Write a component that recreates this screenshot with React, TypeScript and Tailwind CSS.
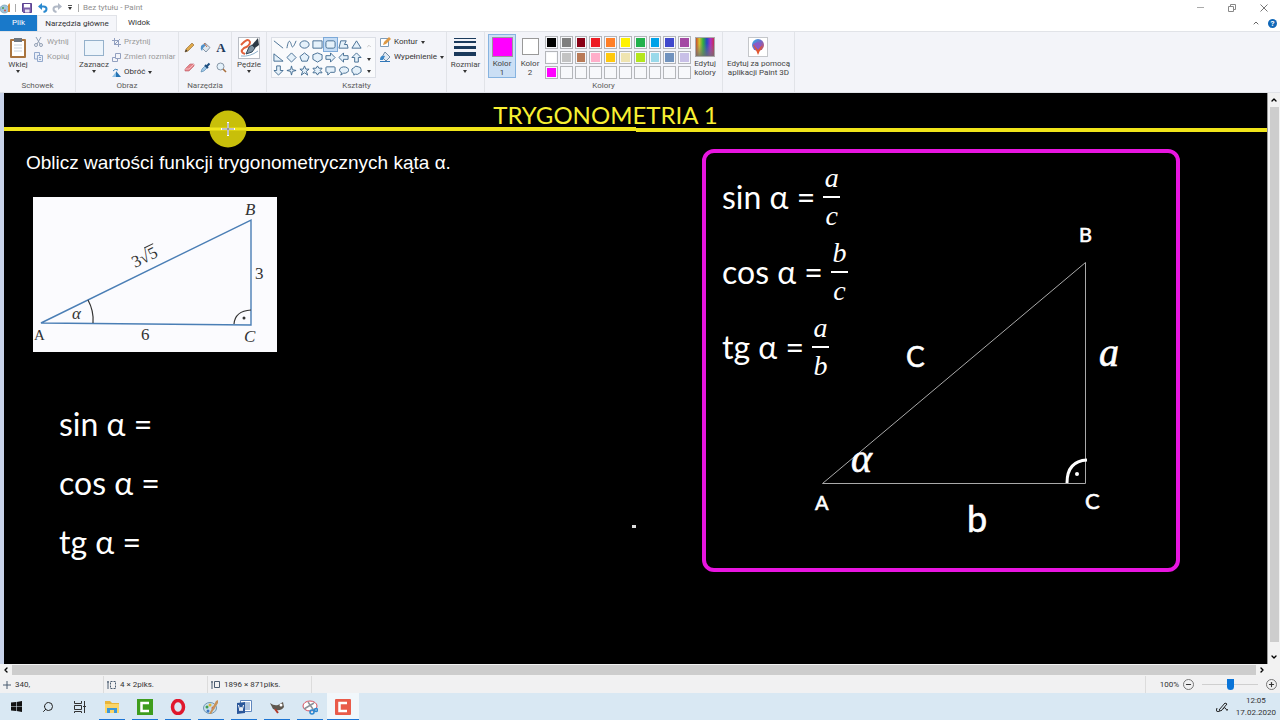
import React from 'react';
import { ChevronDown, ChevronLeft, ChevronRight, ChevronUp, Minus, Plus, Search } from 'lucide-react';

// Palette swatches, row by row. Empty string means an unused slot
const palette = [
  '#000000', '#7f7f7f', '#880015', '#ed1c24', '#ff7f27', '#fff200', '#22b14c', '#00a2e8', '#3f48cc', '#a349a4',
  '#ffffff', '#c3c3c3', '#b97a57', '#ffaec9', '#ffc90e', '#efe4b0', '#b5e61d', '#99d9ea', '#7092be', '#c8bfe7',
  '#ff00ff', '', '', '', '', '', '', '', '', '',
];

// Outlines of the shape gallery, drawn on a 12x12 grid
const shapes = [
  { name: 'Linia', d: 'M1 2L11 10' },
  { name: 'Krzywa', d: 'M1 10C3 -2 5 3 6 7C7 11 9 7 11 2' },
  { name: 'Elipsa', d: 'M1 6A5 4 0 1 0 11 6A5 4 0 1 0 1 6' },
  { name: 'Prostokąt', d: 'M1 2H11V10H1Z' },
  { name: 'Prostokąt zaokrąglony', d: 'M3 2H9Q11 2 11 4V8Q11 10 9 10H3Q1 10 1 8V4Q1 2 3 2Z' },
  { name: 'Wielokąt', d: 'M1 10L3 2H9L7 6H10L11 10Z' },
  { name: 'Trójkąt', d: 'M6 2L11 10H1Z' },
  { name: 'Trójkąt prostokątny', d: 'M1 2L11 10H1Z' },
  { name: 'Romb', d: 'M6 1L11 6L6 11L1 6Z' },
  { name: 'Pięciokąt', d: 'M6 1L11 5L9 10H3L1 5Z' },
  { name: 'Sześciokąt', d: 'M6 1L11 3V8L6 11L1 8V3Z' },
  { name: 'Strzałka w prawo', d: 'M1 4H6V1L11 6L6 11V8H1Z' },
  { name: 'Strzałka w lewo', d: 'M11 4H6V1L1 6L6 11V8H11Z' },
  { name: 'Strzałka w górę', d: 'M4 11V6H1L6 1L11 6H8V11Z' },
  { name: 'Strzałka w dół', d: 'M4 1V6H1L6 11L11 6H8V1Z' },
  { name: 'Gwiazda czteroramienna', d: 'M6 1L7 5L11 6L7 7L6 11L5 7L1 6L5 5Z' },
  { name: 'Gwiazda pięcioramienna', d: 'M6 1L7.5 4.5H11L8 7L9.5 11L6 8.5L2.5 11L4 7L1 4.5H4.5Z' },
  { name: 'Gwiazda sześcioramienna', d: 'M6 1L7.5 3.5H11L9 6L11 8.5H7.5L6 11L4.5 8.5H1L3 6L1 3.5H4.5Z' },
  { name: 'Objaśnienie zaokrąglone', d: 'M2 2H10Q11 2 11 3V7Q11 8 10 8H6L3 11V8H2Q1 8 1 7V3Q1 2 2 2Z' },
  { name: 'Objaśnienie owalne', d: 'M4 8.5L3 11L6 9A5 3.5 0 1 0 4 8.5Z' },
  { name: 'Objaśnienie w chmurce', d: 'M3 9Q1 9 1 6.500Q0 4 3 3Q5 0 8 2Q11 2 11 5Q12 8 9 9Q7 11 5 10L3 11Z' },
];

const leftFormulas = ['sin α =', 'cos α =', 'tg α ='];

const rightFormulas = [
  { text: 'sin α =', top: 'a', bottom: 'c' },
  { text: 'cos α =', top: 'b', bottom: 'c' },
  { text: 'tg α =', top: 'a', bottom: 'b' },
];

const Caret = () => (
  <svg viewBox="0 0 4 3" className="h-[3px] w-1 shrink-0" aria-hidden="true">
    <path d="M0 0H4L2 3Z" fill="#333" />
  </svg>
);

type GroupProps = { label?: string; className: string; children: React.ReactNode };

// One boxed section of the ribbon with its caption at the bottom
const Group = ({ label, className, children }: GroupProps) => (
  <section className={`flex shrink-0 flex-col border-r border-[#e1e3e8] ${className}`}>
    <div className="flex flex-1 justify-center pt-[5px]">{children}</div>
    {label && <h2 className="h-3 text-center leading-3 text-[#5c5c5c]">{label}</h2>}
  </section>
);

const TitleBar = () => (
  <header className="flex h-[15px] items-center bg-white text-[#8f8f8f]">
    <svg viewBox="0 0 11 12" className="h-3 w-[11px]" aria-hidden="true">
      <ellipse cx="4.500" cy="7" rx="4.500" ry="4" fill="#9fc5dc" stroke="#6d95a9" strokeWidth=".6" />
      <circle cx="3" cy="6" r="1" fill="#4f9b4c" />
      <circle cx="5" cy="8.500" r="1" fill="#cf574a" />
      <path d="M8 10V3L9.500 1L10 3V10Z" fill="#d98d3a" />
    </svg>
    <span className="ml-1 h-2 w-px bg-[#aaa]" />
    <button aria-label="Zapisz" className="ml-1.5">
      <svg viewBox="0 0 10 10" className="size-[10px]">
        <path d="M.5 .5H9.500V9.500H1.500L.5 8.500Z" fill="#7d62ac" stroke="#5b4390" />
        <path d="M2 1H8V4.500H2Z" fill="#fff" />
        <path d="M3 6.500H7.500V9.500H3Z" fill="#e8e2f3" />
      </svg>
    </button>
    <button aria-label="Cofnij" className="ml-1.5">
      <svg viewBox="0 0 10 10" className="size-[10px]" fill="none" stroke="#2b8ad0" strokeWidth="2">
        <path d="M2 3.500H5.500Q8.500 3.500 8.500 6T5.500 9" />
        <path d="M4 0L0 3.500L4 7Z" fill="#2b8ad0" stroke="none" />
      </svg>
    </button>
    <button aria-label="Ponów" className="ml-1">
      <svg viewBox="0 0 10 10" className="size-[10px]" fill="none" stroke="#b1b9c6" strokeWidth="2">
        <path d="M8 3.500H4.500Q1.500 3.500 1.500 6T4.500 9" />
        <path d="M6 0L10 3.500L6 7Z" fill="#b1b9c6" stroke="none" />
      </svg>
    </button>
    <button aria-label="Dostosuj pasek" className="ml-1.5 flex flex-col items-center gap-px">
      <span className="h-px w-1 bg-[#555]" />
      <Caret />
    </button>
    <span className="ml-1.5 h-2 w-px bg-[#aaa]" />
    <h1 className="ml-1">Bez tytułu - Paint</h1>
    <div className="ml-auto flex items-center gap-6 pr-3">
      <button aria-label="Minimalizuj">
        <svg viewBox="0 0 7 7" className="size-[7px]" stroke="#aaa"><path d="M0 3.500H7" /></svg>
      </button>
      <button aria-label="Przywróć">
        <svg viewBox="0 0 8 8" className="size-2" fill="none" stroke="#888"><path d="M.5 2.500H5.500V7.500H.5ZM2.500 2V.5H7.500V5.500H6" /></svg>
      </button>
      <button aria-label="Zamknij">
        <svg viewBox="0 0 8 8" className="size-2" stroke="#777"><path d="M.5 .5L7.500 7.500M7.500 .5L.5 7.500" /></svg>
      </button>
    </div>
  </header>
);

const Tabs = () => (
  <nav className="flex h-4 items-stretch bg-white text-[#333]">
    <button className="w-[37px] bg-[#1979ca] text-white">Plik</button>
    <button className="w-20 border-x border-t border-[#e1e3e8] bg-[#f5f6fa]">Narzędzia główne</button>
    <button className="w-11">Widok</button>
    <div className="ml-auto flex items-center gap-2 pr-[3px]">
      <button aria-label="Zwiń wstążkę"><ChevronUp className="size-2 text-[#666]" strokeWidth={3} /></button>
      <button className="size-[9px] rounded-full bg-[#1067b8] text-[8px] leading-[9px] font-bold text-white">?</button>
    </div>
  </nav>
);

const Ribbon = () => (
  <div className="flex h-[62px] border-y border-[#e1e3e8] bg-[#f3f4f9] text-[#444]">
    {/* Clipboard */}
    <Group label="Schowek" className="w-[76px]">
      <div className="flex w-full gap-1 pl-1.5">
        <button className="flex h-9 w-6 flex-col items-center leading-[10px]">
          <svg viewBox="0 0 18 22" className="mb-px h-[22px] w-[18px] shrink-0" aria-hidden="true">
            <rect x="1" y="2" width="16" height="19" rx="1" fill="#a9743f" />
            <path d="M3 4H15V19H3Z" fill="#fff" />
            <path d="M5 8H13M5 11H13M5 14H13" stroke="#c8d2dd" />
            <path d="M5 1H13V5H5Z" fill="#6e7680" />
          </svg>
          Wklej
          <Caret />
        </button>
        <div className="flex flex-col gap-[5px] text-[#9a9a9a]">
          <button className="flex h-[10px] items-center gap-1">
            <svg viewBox="0 0 9 10" className="h-[10px] w-[9px]" fill="none" stroke="#92a0b4" aria-hidden="true">
              <path d="M2 0L6 7M7 0L3 7" />
              <circle cx="2" cy="8" r="1.500" />
              <circle cx="7" cy="8" r="1.500" />
            </svg>
            Wytnij
          </button>
          <button className="flex h-[10px] items-center gap-1">
            <svg viewBox="0 0 9 10" className="h-[10px] w-[9px]" fill="#e9eef7" stroke="#92a8cc" aria-hidden="true">
              <path d="M.5 .5H5.500V7H.5Z" />
              <path d="M3.500 3.500H8.500V9.500H3.500ZM5 5.500H7M5 7.500H7" />
            </svg>
            Kopiuj
          </button>
        </div>
      </div>
    </Group>

    {/* Image */}
    <Group label="Obraz" className="w-[103px]">
      <div className="flex w-full gap-1 pl-1">
        <button className="flex w-7 flex-col items-center leading-[10px]">
          <svg viewBox="0 0 22 22" className="mb-px size-[22px] shrink-0" aria-hidden="true">
            <rect x="1.500" y="3.500" width="19" height="15" fill="#edf4fb" stroke="#3b6f9c" strokeDasharray="1 1" />
          </svg>
          Zaznacz
          <Caret />
        </button>
        <div className="flex flex-col gap-[5px] text-[#9a9a9a]">
          <button className="flex h-[10px] items-center gap-[3px]">
            <svg viewBox="0 0 9 9" className="size-[9px]" fill="none" stroke="#92a0c0" aria-hidden="true">
              <path d="M2.500 0V6.500H9M0 2.500H6.500V9M2 7L8 1" />
            </svg>
            Przytnij
          </button>
          <button className="flex h-[10px] items-center gap-[3px] whitespace-nowrap">
            <svg viewBox="0 0 9 9" className="size-[9px]" fill="none" stroke="#92a0c0" aria-hidden="true">
              <path d="M3.500 .5H8.500V5.500H3.500ZM3 4.500H.5V8.500H5.500V6" />
            </svg>
            Zmień rozmiar
          </button>
          <button className="flex h-[10px] items-center gap-[3px] text-[#333]">
            <svg viewBox="0 0 9 9" className="size-[9px]" aria-hidden="true">
              <path d="M0 9L4 4V9Z" fill="#8fc0e6" />
              <path d="M4 3L9 9H4Z" fill="#2372b3" />
              <path d="M1 3Q3 0 6 2" fill="none" stroke="#3a7db8" />
            </svg>
            Obróć
            <Caret />
          </button>
        </div>
      </div>
    </Group>

    {/* Tools */}
    <Group label="Narzędzia" className="w-[53px]">
      <div className="grid h-9 grid-cols-3 gap-x-[5px] gap-y-2 pt-1">
        <button aria-label="Ołówek">
          <svg viewBox="0 0 11 11" className="size-[11px]">
            <path d="M1 10L2 7L8 1L10 3L4 9Z" fill="#e0a94a" stroke="#8c6330" strokeWidth=".6" />
            <path d="M1 10L2 7.500L3.500 9Z" fill="#333" />
          </svg>
        </button>
        <button aria-label="Wypełnianie kolorem">
          <svg viewBox="0 0 11 11" className="size-[11px]">
            <path d="M5 1L10 5.500L6 10L2 6Z" fill="#dfe7ee" stroke="#6b8097" strokeWidth=".8" />
            <path d="M1 4Q3 1 6 3L3 6L2 9Q0 7 1 4Z" fill="#4f91ca" />
            <path d="M4 1L7 5" stroke="#c2704b" />
          </svg>
        </button>
        <button aria-label="Tekst" className="font-['Liberation_Serif',serif] text-[13px] leading-[11px] font-bold text-[#1f3a5c]">A</button>
        <button aria-label="Gumka">
          <svg viewBox="0 0 11 11" className="size-[11px]">
            <path d="M1 7L6 2H10V4L5 9H1Z" fill="#e5838a" stroke="#bd5d66" strokeWidth=".6" />
            <path d="M1 7H5L10 2" fill="none" stroke="#f5b9bd" />
          </svg>
        </button>
        <button aria-label="Selektor kolorów">
          <svg viewBox="0 0 11 11" className="size-[11px]">
            <path d="M1 10L2 7L6 3L8 5L4 9Z" fill="#9fc8e8" stroke="#4d7fa8" strokeWidth=".6" />
            <path d="M5 3L8 6M7 4L9.500 1.500" stroke="#1e4e80" strokeWidth="2" />
          </svg>
        </button>
        <button aria-label="Lupa">
          <svg viewBox="0 0 11 11" className="size-[11px]">
            <circle cx="4.500" cy="4.500" r="3.500" fill="#e4f1fb" stroke="#8797a7" />
            <path d="M7 7L10 10" stroke="#a9703c" strokeWidth="1.600" />
          </svg>
        </button>
      </div>
    </Group>

    {/* Brushes */}
    <Group className="w-[35px]">
      <button className="flex flex-col items-center leading-[10px]">
        <svg viewBox="0 0 22 22" className="mb-px size-[22px] shrink-0" aria-hidden="true">
          <rect x=".5" y=".5" width="21" height="21" fill="#fff" stroke="#b9bdc4" />
          <path d="M3 8Q10 0 12 5Q12 9 6 11Q1 15 7 17" fill="none" stroke="#e2603a" strokeWidth="2" />
          <path d="M8 17L11 10L14 8L17 11L14 15Z" fill="#8195a5" stroke="#34495a" />
          <path d="M14 8L20 1L21 8L17 11Z" fill="#2c3844" />
          <path d="M3 19Q12 20 20 14" fill="none" stroke="#8db1cc" />
        </svg>
        Pędzle
        <Caret />
      </button>
    </Group>

    {/* Shapes */}
    <Group label="Kształty" className="w-[180px]">
      <div className="flex w-full gap-1 pl-1">
        <div className="flex h-[41px] border border-[#dcdfe6] bg-[#f9fafc]">
          <div className="grid grid-cols-7">
            {shapes.map((shape) => (
              <button
                key={shape.name}
                aria-label={shape.name}
                className={shape.name === 'Prostokąt zaokrąglony'
                  ? 'flex size-[13px] items-center justify-center bg-[#c4dcf5] outline outline-[#7da9d8]'
                  : 'flex size-[13px] items-center justify-center'}
              >
                <svg viewBox="0 0 12 12" className="size-[11px]" fill="#e5f1fa" stroke="#40698f">
                  <path d={shape.d} fill={shape.name === 'Linia' || shape.name === 'Krzywa' ? 'none' : undefined} />
                </svg>
              </button>
            ))}
          </div>
          <div className="flex w-3 flex-col items-center justify-around">
            <ChevronUp className="size-1.5 text-[#999]" />
            <Caret />
            <Caret />
          </div>
        </div>
        <div className="flex flex-col gap-[5px] text-[#333]">
          <button className="flex h-[10px] items-center gap-[3px]">
            <svg viewBox="0 0 11 10" className="h-[10px] w-[11px]" aria-hidden="true">
              <path d="M.5 1.500H8.500V9.500H.5Z" fill="#fff" stroke="#7d9bb8" />
              <path d="M3 8L4 5L9 0L11 2L6 7Z" fill="#dd9844" />
            </svg>
            Kontur
            <Caret />
          </button>
          <button className="flex h-[10px] items-center gap-[3px]">
            <svg viewBox="0 0 11 10" className="h-[10px] w-[11px]" aria-hidden="true">
              <path d="M0 9.500H10" stroke="#2f77bb" />
              <path d="M5 0L10 5L6 9L2 5Z" fill="#dfe8f2" stroke="#6f8aa5" />
              <path d="M0 8Q0 3 5 4L3 8Z" fill="#3a86c8" />
            </svg>
            Wypełnienie
            <Caret />
          </button>
        </div>
      </div>
    </Group>

    {/* Line width */}
    <Group className="w-[38px]">
      <button className="flex flex-col items-center leading-[10px]">
        <svg viewBox="0 0 22 22" className="mb-px size-[22px] shrink-0" stroke="#1b3a5c" aria-hidden="true">
          <path d="M0 1.500H22" />
          <path d="M0 5H22" strokeWidth="2" />
          <path d="M0 10.500H22" strokeWidth="3" />
          <path d="M0 17H22" strokeWidth="4" />
        </svg>
        Rozmiar
        <Caret />
      </button>
    </Group>

    {/* Colors */}
    <Group label="Kolory" className="w-[238px]">
      <div className="flex w-full pl-[3px]">
        <button className="-mt-[3px] flex h-[44px] w-7 flex-col items-center border border-[#86b3e0] bg-[#cbdff5] pt-0.5 leading-[9px]">
          <span className="mb-0.5 size-[21px] border border-[#999] bg-[#ff00ff]" />
          Kolor<br />1
        </button>
        <button className="flex w-7 flex-col items-center pt-px leading-[9px]">
          <span className="mb-1 size-[17px] border border-[#999] bg-white" />
          Kolor<br />2
        </button>
        <div className="-mt-px ml-px grid h-[43px] w-[146px] grid-cols-10 gap-0.5">
          {palette.map((color, index) => (
            <button key={index} aria-label={color || 'Pusty kolor'} className="border border-[#b4b6ba] bg-[#f7f8fb] p-px">
              <span className="block size-full" style={{ backgroundColor: color || undefined }} />
            </button>
          ))}
        </div>
        <button className="flex w-7 flex-col items-center leading-[9px]">
          <svg viewBox="0 0 20 20" className="mb-0.5 size-5 shrink-0" aria-hidden="true">
            <defs>
              <linearGradient id="rainbow">
                <stop offset="0" stopColor="#c23b2f" />
                <stop offset=".2" stopColor="#d6c22f" />
                <stop offset=".4" stopColor="#2fae3f" />
                <stop offset=".6" stopColor="#2448c6" />
                <stop offset=".8" stopColor="#b02fc0" />
                <stop offset="1" stopColor="#c92f3f" />
              </linearGradient>
              <linearGradient id="shade" x2="0" y2="1">
                <stop offset=".3" stopColor="#808080" stopOpacity="0" />
                <stop offset="1" stopColor="#707070" stopOpacity=".8" />
              </linearGradient>
            </defs>
            <rect x=".5" y=".5" width="19" height="19" fill="url(#rainbow)" stroke="#aaa" />
            <rect x="1" y="1" width="18" height="18" fill="url(#shade)" />
          </svg>
          Edytuj<br />kolory
        </button>
      </div>
    </Group>

    {/* Paint 3D */}
    <Group className="w-[72px]">
      <button className="flex flex-col items-center leading-[9px] whitespace-nowrap">
        <svg viewBox="0 0 20 20" className="mb-0.5 size-5 shrink-0" aria-hidden="true">
          <defs>
            <linearGradient id="drop" x1="0" y1="0" x2="1" y2="1">
              <stop offset="0" stopColor="#27b4e8" />
              <stop offset=".5" stopColor="#7864c8" />
              <stop offset="1" stopColor="#e8503a" />
            </linearGradient>
          </defs>
          <rect x=".5" y=".5" width="19" height="19" fill="#fff" stroke="#c4c6ca" />
          <circle cx="10" cy="8" r="6" fill="url(#drop)" />
          <path d="M5 8L10 6L14 9L10 18L8 13Z" fill="#e2572f" />
          <path d="M5 7L10 5L14 8L10 13Z" fill="#8a5ac6" />
        </svg>
        Edytuj za pomocą<br />aplikacji Paint 3D
      </button>
    </Group>
  </div>
);

// Scanned exercise with the 6 / 3 / 3√5 triangle
const Exercise = () => (
  <svg viewBox="0 0 244 155" className="ml-[29px] h-[155px] w-[244px] bg-[#fbfbfe] font-['Liberation_Serif',serif] text-[17px]">
    <path d="M8 126L218 23V128Z" fill="none" stroke="#4a7eb5" strokeWidth="1.400" />
    <path d="M55 103Q61 114 60 126M201 127Q202 114 218 113" fill="none" stroke="#333" strokeWidth="1.200" />
    <circle cx="211" cy="121" r="1.500" fill="#333" />
    <g fill="#333">
      <text x="212" y="18" fontStyle="italic">B</text>
      <text x="1" y="143" fontSize="15">A</text>
      <text x="211" y="145" fontStyle="italic">C</text>
      <text x="108" y="143">6</text>
      <text x="222" y="82">3</text>
      <text x="39" y="122" fontStyle="italic">α</text>
      <g transform="rotate(-26 102 71)">
        <text x="102" y="71">3√</text>
        <text x="120" y="71">5</text>
        <path d="M119 57H129" stroke="#333" />
      </g>
    </g>
  </svg>
);

const Fraction = ({ top, bottom }: { top: string; bottom: string }) => (
  <span className="flex w-[17px] flex-col items-center font-['Liberation_Serif',serif] text-[28px] leading-9 italic">
    <span>{top}</span>
    <span className="h-0.5 w-full bg-white" />
    <span>{bottom}</span>
  </span>
);

const Definitions = () => (
  <div className="relative mt-[17px] h-[423px] w-[478px] rounded-xl border-4 border-[#e815e0] pt-1.5 pl-4">
    {rightFormulas.map((formula) => (
      <p key={formula.text} className="flex h-[75px] items-center gap-2">
        {formula.text}
        <Fraction top={formula.top} bottom={formula.bottom} />
      </p>
    ))}

    {/* Hand drawn triangle with its labels */}
    <svg viewBox="0 0 470 415" className="absolute inset-0 size-full font-['Lato','Open_Sans',sans-serif]" fill="#fff">
      <path d="M116.500 330.500L379.500 109.500V330.500Z" fill="none" stroke="#a9a9a9" />
      <path d="M361 330Q361 308 381 307" fill="none" stroke="#fff" strokeWidth="3" />
      <circle cx="371" cy="321" r="2" />
      <g stroke="#fff" strokeWidth=".6">
        <text x="373" y="89" fontSize="20">B</text>
        <text x="109" y="357" fontSize="20">A</text>
        <text x="379" y="356" fontSize="22">C</text>
        <text x="200" y="214" fontSize="28">C</text>
        <text x="261" y="379" fontSize="36">b</text>
        <text x="393" y="213" fontSize="40" fontStyle="italic" className="font-['Liberation_Serif',serif]">a</text>
        <text x="145" y="319" fontSize="40" fontStyle="italic" className="font-['Liberation_Serif',serif]">α</text>
      </g>
    </svg>
  </div>
);

const Canvas = () => (
  <main className="relative flex-1 bg-black font-['Lato','Open_Sans',sans-serif] text-[32px] text-white">
    <h2 className="h-[34px] pt-1 pr-[60px] text-center text-[24px] leading-9 text-[#f8f032]">TRYGONOMETRIA 1</h2>
    <div className="flex h-[5px]">
      <div className="h-1 w-1/2 bg-[#f0e51a]" />
      <div className="mt-px h-1 w-1/2 bg-[#f0e51a]" />
    </div>

    <div className="flex justify-between pr-[87px]">
      <div>
        <p className="mt-[15px] mb-[18px] pl-[22px] font-['Liberation_Sans_Narrow','Liberation_Sans',sans-serif] text-[19px] leading-8">
          Oblicz wartości funkcji trygonometrycznych kąta α.
        </p>
        <Exercise />
        <div className="mt-[42px] pl-[55px]">
          {leftFormulas.map((formula) => (
            <p key={formula} className="h-[59px] leading-[59px]">{formula}</p>
          ))}
        </div>
      </div>
      <Definitions />
    </div>

    {/* Pointer highlight */}
    <svg viewBox="0 0 38 38" className="absolute top-[17px] left-[205px] size-[38px]" aria-hidden="true">
      <circle cx="19" cy="19" r="18.500" fill="#c8bf0a" />
      <path d="M0 19H38" stroke="#f0e51a" strokeWidth="3" />
      <path d="M19 12V26M12 19H26" stroke="#fff" strokeWidth="2" />
      <path d="M19 13V25M13 19H25" stroke="#333" strokeWidth=".6" />
    </svg>
    {/* Small selection left on the canvas */}
    <span className="absolute top-[432px] left-[628px] h-[3px] w-1 bg-[#ddd]" />
  </main>
);

const StatusBar = () => (
  <footer className="flex h-[17px] items-stretch bg-[#f1f1f2] text-[#333]">
    <div className="flex w-[104px] items-center gap-1 border-r border-[#dcdcdc] pl-[3px]">
      <svg viewBox="0 0 8 8" className="size-2" stroke="#4b5c70" aria-hidden="true"><path d="M4 0V8M0 4H8" /></svg>
      340,
    </div>
    <div className="flex w-[104px] items-center gap-1 border-r border-[#dcdcdc] pl-[3px]">
      <svg viewBox="0 0 9 8" className="h-2 w-[9px]" fill="none" stroke="#4b5c70" aria-hidden="true">
        <path d="M1 0V8M0 1H2" />
        <path d="M3.500 .5H8.500V7.500H3.500Z" strokeDasharray="2 1" />
      </svg>
      4 × 2piks.
    </div>
    <div className="flex w-[104px] items-center gap-1 border-r border-[#dcdcdc] pl-[3px]">
      <svg viewBox="0 0 9 8" className="h-2 w-[9px]" fill="none" stroke="#4b5c70" aria-hidden="true">
        <path d="M1 0V8M0 1H2M3.500 .5H8.500V6.500H3.500Z" />
      </svg>
      1896 × 871piks.
    </div>
    <div className="ml-auto flex items-center gap-1 border-l border-[#dcdcdc] pr-[3px] pl-[14px]">
      100%
      <button aria-label="Pomniejsz" className="flex size-[11px] items-center justify-center rounded-full border border-[#777]">
        <Minus className="size-[7px]" strokeWidth={4} />
      </button>
      <input
        type="range"
        aria-label="Powiększenie"
        defaultValue={50}
        className="mx-1 h-3 w-14 appearance-none bg-[linear-gradient(#cfcfcf,#cfcfcf)] bg-[length:100%_1px] bg-center bg-no-repeat [&::-webkit-slider-thumb]:h-[11px] [&::-webkit-slider-thumb]:w-[7px] [&::-webkit-slider-thumb]:appearance-none [&::-webkit-slider-thumb]:rounded-b-sm [&::-webkit-slider-thumb]:bg-[#0a74d8]"
      />
      <button aria-label="Powiększ" className="flex size-[11px] items-center justify-center rounded-full border border-[#777]">
        <Plus className="size-[7px]" strokeWidth={4} />
      </button>
    </div>
  </footer>
);

const apps = [
  {
    name: 'Eksplorator plików',
    icon: (
      <>
        <path d="M1 2H6L8 4H15V14H1Z" fill="#e9b53a" />
        <path d="M1 5H15V14H1Z" fill="#fbd568" />
        <path d="M3 14V9H13V14H10V11H6V14Z" fill="#3b97d8" />
      </>
    ),
  },
  {
    name: 'Camtasia',
    icon: (
      <>
        <rect width="16" height="16" fill="#3f9d1d" />
        <path d="M12 4H4.500V12H12" fill="none" stroke="#fff" strokeWidth="2.500" />
      </>
    ),
  },
  {
    name: 'Opera',
    icon: <ellipse cx="8" cy="8" rx="5.500" ry="6.500" fill="none" stroke="#e0182d" strokeWidth="3.500" />,
  },
  {
    name: 'Paint',
    icon: (
      <>
        <ellipse cx="7" cy="9" rx="6.500" ry="5.500" fill="#c8dfed" stroke="#7198b2" />
        <circle cx="4" cy="8" r="1.500" fill="#3e9d51" />
        <circle cx="7" cy="6" r="1.500" fill="#dfb52e" />
        <circle cx="5" cy="12" r="1.500" fill="#3f78c2" />
        <circle cx="10" cy="9" r="1.500" fill="#cf4d3c" />
        <path d="M6 15L13 2L15 1V4L8 15Z" fill="#c8935a" />
      </>
    ),
  },
  {
    name: 'Word',
    icon: (
      <>
        <path d="M4.500 1.500H15.500V12.500H4.500Z" fill="#fff" stroke="#5f86bd" />
        <path d="M9 4H14M9 6H14M9 8H14M9 10H14" stroke="#5f86bd" />
        <path d="M1 4L9 3V14L1 15Z" fill="#2b579a" />
        <path d="M2.500 6L4 12L5 8L6 12L7.500 6" fill="none" stroke="#fff" />
      </>
    ),
  },
  {
    name: 'GIMP',
    icon: (
      <>
        <path d="M1 4Q5 7 9 6L14 3L15 8Q12 12 7 11L4 10Z" fill="#5f584f" />
        <path d="M6 10L9 14" stroke="#b03a2c" strokeWidth="2" />
        <circle cx="12" cy="6" r="1.500" fill="#fff" />
      </>
    ),
  },
  {
    name: 'Narzędzie Wycinanie',
    icon: (
      <>
        <ellipse cx="8" cy="7" rx="7" ry="5" fill="#fff" stroke="#d64f5c" />
        <path d="M2 10L12 4M6 3L13 13" stroke="#8c9299" strokeWidth="1.500" />
        <circle cx="10" cy="13" r="2" fill="none" stroke="#2d87cf" strokeWidth="1.500" />
        <circle cx="14" cy="11" r="1.500" fill="none" stroke="#2d87cf" strokeWidth="1.500" />
      </>
    ),
  },
  {
    name: 'Camtasia Recorder',
    icon: (
      <>
        <rect width="16" height="16" rx="1" fill="#e95b4a" />
        <path d="M12 4H4.500V12H12" fill="none" stroke="#fff" strokeWidth="2.500" />
      </>
    ),
  },
];

const Taskbar = () => (
  <div className="flex h-[27px] items-stretch bg-[#d9e8f3] text-[#333]">
    <button aria-label="Start" className="flex w-8 items-center justify-center">
      <svg viewBox="0 0 11 11" className="size-[11px]" fill="#111">
        <path d="M0 1.500L5 1V5H0ZM5.600 1L11 0V5H5.600ZM0 5.600H5V10L0 9.500ZM5.600 5.600H11V11L5.600 10Z" />
      </svg>
    </button>
    <button aria-label="Szukaj" className="flex w-8 items-center justify-center">
      <Search className="size-3 -scale-x-100 text-[#222]" strokeWidth={2} />
    </button>
    <button aria-label="Widok zadań" className="flex w-8 items-center justify-center">
      <svg viewBox="0 0 12 12" className="size-3" fill="none" stroke="#333">
        <path d="M.5 0V2.500H7.500V0M.5 4.500H7.500V8.500H.5ZM.5 12V10.500H7.500V12M10.500 0V12M9 5.500H12" />
      </svg>
    </button>
    <div className="flex gap-px">
      {apps.map((app) => (
        <button
          key={app.name}
          aria-label={app.name}
          className={app.name === 'Camtasia Recorder'
            ? 'flex w-8 items-center justify-center bg-[#f1f7fb] bg-[linear-gradient(#1b74d4,#1b74d4)] bg-[length:32px_1px] bg-bottom bg-no-repeat'
            : 'flex w-8 items-center justify-center bg-[linear-gradient(#1b74d4,#1b74d4)] bg-[length:26px_1px] bg-bottom bg-no-repeat'}
        >
          <svg viewBox="0 0 16 16" className="size-4">{app.icon}</svg>
        </button>
      ))}
    </div>
    <div className="ml-auto flex items-center gap-2 pr-1">
      <svg viewBox="0 0 12 12" className="size-3" fill="none" stroke="#222" aria-hidden="true">
        <path d="M3 9L9 2L11 3L5 10ZM1 7Q-1 12 4 10M7 8Q9 5 10 8T12 8" />
      </svg>
      <div className="text-center leading-3">
        <p>12:05</p>
        <p>17.02.2020</p>
      </div>
    </div>
  </div>
);

const App = () => {
  return (
    <div className="flex min-h-screen flex-col bg-white font-['Roboto','Open_Sans',sans-serif] text-[8px] leading-3">
      <TitleBar />
      <Tabs />
      <Ribbon />
      <div className="flex flex-1 bg-[#c9d4ea] pl-1">
        <Canvas />
        <div className="flex w-[13px] flex-col items-center border-l border-[#999] bg-[#f2f2f2]">
          <button aria-label="W górę" className="py-[3px]"><ChevronUp className="size-2 text-black" strokeWidth={4} /></button>
          <div className="mb-2 w-[9px] flex-1 bg-[#cdcdcd]" />
          <button aria-label="W dół" className="py-[3px]"><ChevronDown className="size-2 text-black" strokeWidth={4} /></button>
        </div>
      </div>
      <div className="flex h-3 items-center gap-0.5 bg-[#f2f2f2] pr-[14px] pl-0.5">
        <button aria-label="W lewo"><ChevronLeft className="size-2 text-black" strokeWidth={4} /></button>
        <div className="h-[10px] flex-1 bg-[#cdcdcd]" />
        <button aria-label="W prawo"><ChevronRight className="size-2 text-black" strokeWidth={4} /></button>
      </div>
      <StatusBar />
      <Taskbar />
    </div>
  );
};

export default App;
